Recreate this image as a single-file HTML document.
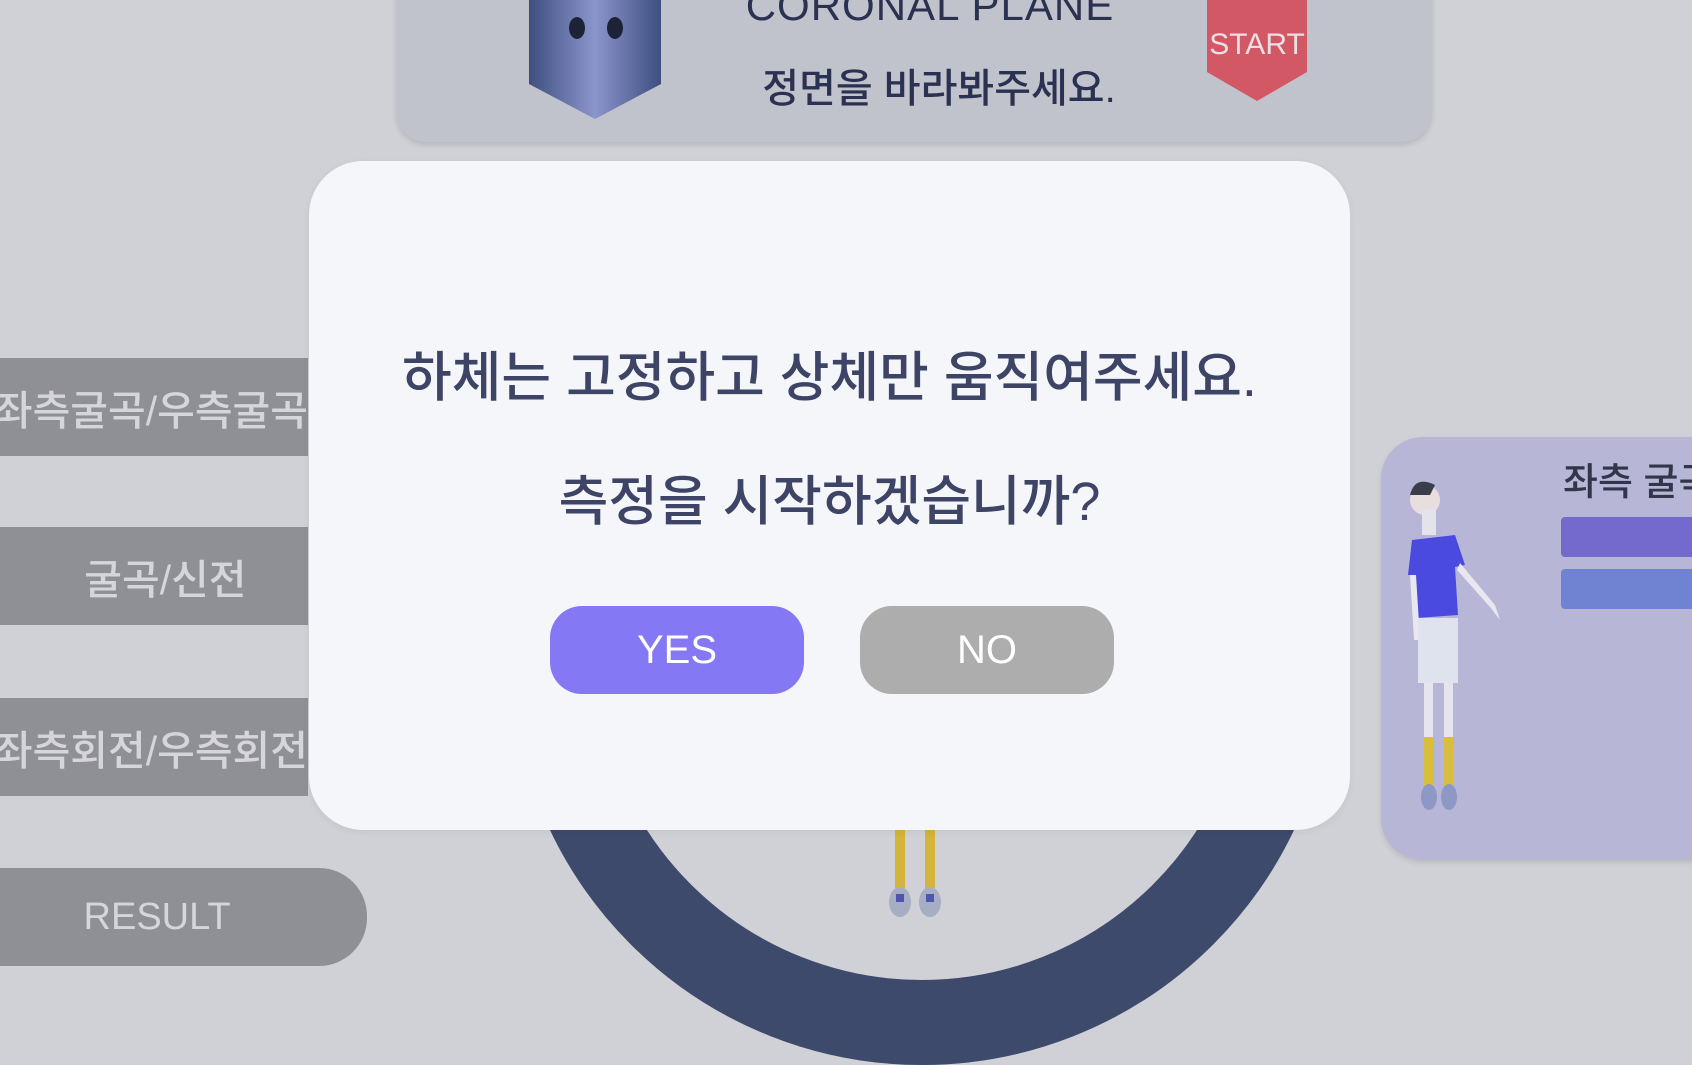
<!DOCTYPE html>
<html><head><meta charset="utf-8"><style>
*{margin:0;padding:0;box-sizing:border-box}
body{width:1692px;height:991px;overflow:hidden;background:#d0d1d6;position:relative;font-family:"Liberation Sans","Noto Sans CJK KR",sans-serif}
.abs{position:absolute}
.tab{position:absolute;left:0;width:308px;height:98px;background:#8f9096;color:#d6d6da;font-size:41px;display:flex;align-items:center;justify-content:center;white-space:nowrap;overflow:hidden;font-weight:500}
.btn{position:absolute;top:606px;width:254px;height:88px;border-radius:32px;color:#fff;font-size:40px;display:flex;align-items:center;justify-content:center}
</style></head><body>
<!-- top panel -->
<div class="abs" style="left:396px;top:-40px;width:1036px;height:182px;background:#c0c2cc;border-radius:30px;box-shadow:0 3px 6px rgba(0,0,0,0.12)"></div>
<svg class="abs" style="left:529px;top:0" width="132" height="120"><defs><linearGradient id="g" x1="0" y1="0" x2="1" y2="0"><stop offset="0" stop-color="#3e4f80"/><stop offset=".5" stop-color="#8b95cc"/><stop offset="1" stop-color="#3e4f80"/></linearGradient></defs><polygon points="0,0 132,0 132,84 66,119 0,84" fill="url(#g)"/><ellipse cx="48" cy="28" rx="8" ry="11" fill="#1d2336"/><ellipse cx="86" cy="28" rx="8" ry="11" fill="#1d2336"/></svg>
<div class="abs" style="left:600px;top:-18px;width:660px;text-align:center;font-size:42px;color:#2b3150;letter-spacing:1px">CORONAL PLANE</div>
<div class="abs" style="left:600px;top:56px;width:678px;text-align:center;font-size:40px;font-weight:500;color:#2b3150">정면을 바라봐주세요.</div>
<svg class="abs" style="left:1207px;top:0" width="100" height="101"><polygon points="0,0 100,0 100,72 50,101 0,72" fill="#d35865"/><text x="50" y="54" text-anchor="middle" font-family="Liberation Sans" font-size="30" fill="#eadfe3">START</text></svg>
<!-- left tabs -->
<div class="tab" style="top:358px;justify-content:flex-end">좌측굴곡/우측굴곡</div>
<div class="tab" style="top:527px">&nbsp;&nbsp;굴곡/신전</div>
<div class="tab" style="top:698px;justify-content:flex-end">좌측회전/우측회전</div>
<div class="tab" style="top:868px;width:367px;border-radius:0 48px 48px 0;font-size:38px;font-weight:400">RESULT&nbsp;&nbsp;&nbsp;&nbsp;&nbsp;</div>
<!-- ring -->
<div class="abs" style="left:510px;top:241px;width:824px;height:824px;border-radius:50%;border:85px solid #3e4a6c"></div>
<!-- legs -->
<svg class="abs" style="left:880px;top:826px" width="80" height="95"><rect x="15" y="0" width="10" height="62" fill="#d4b43a"/><rect x="45" y="0" width="10" height="62" fill="#d4b43a"/><ellipse cx="20" cy="76" rx="11" ry="15" fill="#a7adc2"/><ellipse cx="50" cy="76" rx="11" ry="15" fill="#a7adc2"/><rect x="16" y="68" width="8" height="8" fill="#4d55b0"/><rect x="46" y="68" width="8" height="8" fill="#4d55b0"/></svg>
<!-- right card -->
<div class="abs" style="left:1381px;top:437px;width:400px;height:423px;background:#b8b6d6;border-radius:42px;box-shadow:0 3px 6px rgba(0,0,0,0.1)"></div>
<div class="abs" style="left:1563px;top:451px;font-size:38px;font-weight:500;color:#33354a;white-space:nowrap">좌측 굴곡</div>
<div class="abs" style="left:1561px;top:517px;width:200px;height:40px;background:#7469cc;border-radius:4px"></div>
<div class="abs" style="left:1561px;top:569px;width:200px;height:40px;background:#6f83d2;border-radius:4px"></div>
<svg class="abs" style="left:1400px;top:475px" width="140" height="360">
<circle cx="25" cy="25" r="15" fill="#e8dede"/><path d="M10 20 Q15 0 35 10 L30 20Z" fill="#3a3d4a"/>
<rect x="22" y="35" width="14" height="25" fill="#e4e2ea"/>
<path d="M12 65 L55 60 L65 90 L55 92 L58 140 L17 143 L15 100 L8 100Z" fill="#4a4ae0"/>
<path d="M60 88 L95 130 L100 145 L90 132 L57 95Z" fill="#e8e6ee"/>
<path d="M10 100 L14 165 L20 165 L16 100Z" fill="#e8e6ee"/>
<rect x="18" y="143" width="40" height="65" fill="#dfe3ee"/>
<rect x="24" y="208" width="9" height="70" fill="#e6e4ee"/><rect x="44" y="208" width="9" height="70" fill="#e6e4ee"/>
<rect x="24" y="262" width="10" height="50" fill="#d8be3c"/><rect x="44" y="262" width="10" height="50" fill="#d8be3c"/>
<ellipse cx="29" cy="322" rx="8" ry="13" fill="#8d98c4"/><ellipse cx="49" cy="322" rx="8" ry="13" fill="#8d98c4"/>
</svg>
<!-- modal -->
<div class="abs" style="left:309px;top:161px;width:1041px;height:669px;background:#f5f6fa;border-radius:54px;box-shadow:0 2px 8px rgba(0,0,0,0.06)"></div>
<div class="abs" style="left:309px;top:333px;width:1041px;text-align:center;font-size:54px;font-weight:500;color:#3d4466;white-space:nowrap">하체는 고정하고 상체만 움직여주세요.</div>
<div class="abs" style="left:309px;top:457px;width:1041px;text-align:center;font-size:54px;font-weight:500;color:#3d4466">측정을 시작하겠습니까?</div>
<div class="btn" style="left:550px;background:#8478f5">YES</div>
<div class="btn" style="left:860px;background:#adadad">NO</div>
</body></html>
